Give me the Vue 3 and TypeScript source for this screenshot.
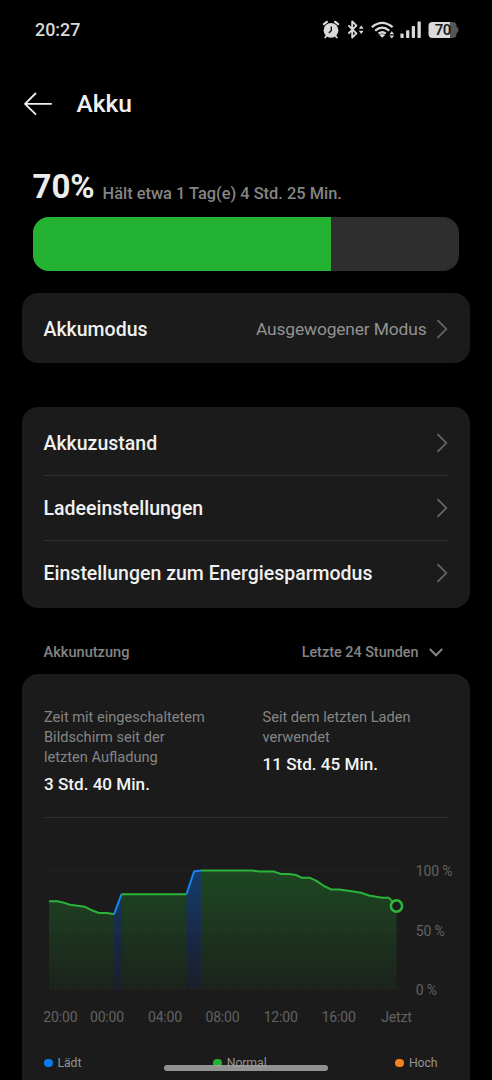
<script setup lang="ts">
interface Point { x: number; y: number }
interface Segment { kind: 'normal' | 'charging'; points: Point[] }

const level = 70
const settings: string[] = ['Akkuzustand', 'Ladeeinstellungen', 'Einstellungen zum Energiesparmodus']
const base = 129

const toPoints = (pairs: number[][]): Point[] => pairs.map(([x, y]) => ({ x, y }))

const segments: Segment[] = [
  { kind: 'normal', points: toPoints([[5, 41.3], [13, 41.3], [19, 42.4], [26, 44.8], [41, 46.8], [49, 50.8], [55, 53], [63, 53], [70, 54.3]]) },
  { kind: 'charging', points: toPoints([[70, 54.3], [77.5, 34.2]]) },
  { kind: 'normal', points: toPoints([[77.5, 34.2], [142.5, 34.2]]) },
  { kind: 'charging', points: toPoints([[142.5, 34.2], [150, 11.6], [157, 10.5]]) },
  { kind: 'normal', points: toPoints([[157, 10.5], [208, 10.5], [215, 11.6], [230, 11.6], [237, 14], [245, 14], [252, 15], [258, 17.8], [266, 17.8], [272, 20.6], [280, 26], [287, 29.4], [295, 29.4], [306, 31], [317, 32.8], [325, 35.5], [338, 37.8], [345, 37.8], [352.5, 46]]) },
]

const line = (s: Segment): string => s.points.map((p) => `${p.x},${p.y}`).join(' ')
const area = (s: Segment): string =>
  `${s.points[0].x},${base} ${line(s)} ${s.points[s.points.length - 1].x},${base}`

const rows = [
  { y: 10.5, label: '100 %' },
  { y: 70, label: '50 %' },
  { y: 129, label: '0 %' },
]
const hours = [
  { x: 16.3, label: '20:00' },
  { x: 63, label: '00:00' },
  { x: 121, label: '04:00' },
  { x: 178.5, label: '08:00' },
  { x: 236.7, label: '12:00' },
  { x: 294.7, label: '16:00' },
  { x: 352.5, label: 'Jetzt' },
]
</script>

<template>
  <div class="screen">
    <div class="status">
      <span class="clock">20:27</span>
      <svg class="status-icons" width="140" height="24" viewBox="320 18 140 24">
        <g fill="none" stroke="#dadada">
          <circle cx="331" cy="30.3" r="7.4" fill="#dadada" stroke="none" />
          <path d="M323.9 24.2l3-2.4M338.1 24.2l-3-2.4" stroke-width="2.2" stroke-linecap="round" />
          <path d="M326.8 35.5l-1.6 2M335.2 35.5l1.6 2" stroke-width="1.8" stroke-linecap="round" />
          <path d="M331.3 26.5v4l-2.4 2.4" stroke="#111" stroke-width="1.4" />
          <path d="M348.4 25.4l8 8-4.2 4.2V21.4l4.2 4.2-8 8" stroke-width="1.9" stroke-linejoin="round" />
          <path d="M371.8 27.1Q382.2 18.6 392.6 27.1M375.2 30.6Q382.2 24.6 389.2 30.6M378.6 33.7Q382.2 30.7 385.8 33.7" stroke-width="2.3" />
        </g>
        <g fill="#dadada">
          <path d="M361.2 25.6l2.4 3.2h-4.8zM361.2 34l2.4-3.2h-4.8z" />
          <path d="M379.3 35q2.9-2.2 5.8 0l-2.9 2.7z" />
          <path d="M391.8 31.3l2.4 3h-4.8zM391.8 38.4l2.4-3h-4.8z" />
          <rect x="400.4" y="33.4" width="3.2" height="4.6" rx=".7" />
          <rect x="406.1" y="30.2" width="3.2" height="7.8" rx=".7" />
          <rect x="411.8" y="26" width="3.2" height="12" rx=".7" />
          <rect x="417.5" y="21.4" width="3.3" height="16.6" rx=".7" />
          <path d="M432.5 22H450v16h-17.5q-4 0-4-4v-8q0-4 4-4z" />
          <path d="M450 22h2.5q4 0 4 4v.8q2 .6 2 3.2t-2 3.2v.8q0 4-4 4H450z" fill="#555" />
        </g>
        <text x="442.8" y="35.2" class="battery-text">70</text>
      </svg>
    </div>

    <header class="header">
      <svg width="30" height="26" viewBox="0 0 30 26" fill="none" stroke="#f0f0f0" stroke-width="1.8">
        <path d="M29.8 12.8H3M14 2L3 12.8l11 10.8" stroke-linejoin="round" />
      </svg>
      <h1>Akku</h1>
    </header>

    <div class="summary">
      <strong>{{ level }}%</strong>
      <span>Hält etwa 1 Tag(e) 4 Std. 25 Min.</span>
    </div>
    <div class="level"><div class="level-fill" :style="{ width: level + '%' }"></div></div>

    <section class="card mode">
      <span class="title">Akkumodus</span>
      <span class="value">Ausgewogener Modus</span>
      <svg class="chevron" width="12" height="20" viewBox="0 0 12 20"><path d="M1.5 1.2l8.8 8.8-8.8 8.8" /></svg>
    </section>

    <section class="card settings">
      <div v-for="item in settings" :key="item" class="setting">
        <span class="title">{{ item }}</span>
        <svg class="chevron" width="12" height="20" viewBox="0 0 12 20"><path d="M1.5 1.2l8.8 8.8-8.8 8.8" /></svg>
      </div>
    </section>

    <div class="usage-head">
      <span>Akkunutzung</span>
      <span class="period">Letzte 24 Stunden</span>
      <svg width="14" height="9" viewBox="0 0 14 9" fill="none" stroke="#858585" stroke-width="2"><path d="M.8 1L7 7.3 13.2 1" /></svg>
    </div>

    <section class="card usage">
      <div class="stats">
        <div class="stat">
          <p>Zeit mit eingeschaltetem<br />Bildschirm seit der<br />letzten Aufladung</p>
          <b>3 Std. 40 Min.</b>
        </div>
        <div class="stat">
          <p>Seit dem letzten Laden<br />verwendet</p>
          <b>11 Std. 45 Min.</b>
        </div>
      </div>

      <svg class="chart" width="426" height="170" viewBox="0 0 426 170">
        <defs>
          <linearGradient id="green" gradientUnits="userSpaceOnUse" x1="0" y1="10" x2="0" y2="129">
            <stop offset="0" stop-color="#24b434" stop-opacity=".29" />
            <stop offset="1" stop-color="#24b434" stop-opacity=".05" />
          </linearGradient>
          <linearGradient id="blue" gradientUnits="userSpaceOnUse" x1="0" y1="10" x2="0" y2="129">
            <stop offset="0" stop-color="#0a78f5" stop-opacity=".37" />
            <stop offset="1" stop-color="#0a58f5" stop-opacity=".06" />
          </linearGradient>
        </defs>
        <g v-for="row in rows" :key="row.label">
          <line x1="0" x2="359" :y1="row.y" :y2="row.y" class="grid" />
          <text x="371.8" :y="row.y + 5.5" class="axis">{{ row.label }}</text>
        </g>
        <polygon v-for="(s, i) in segments" :key="'a' + i" :points="area(s)" :class="['area', s.kind]" />
        <polyline v-for="(s, i) in segments" :key="'l' + i" :points="line(s)" :class="['line', s.kind]" />
        <circle cx="352.5" cy="46" r="5.6" class="now" />
        <text v-for="h in hours" :key="h.label" :x="h.x" y="162" class="axis hour">{{ h.label }}</text>
      </svg>

      <div class="legend">
        <span><i class="dot blue"></i>Lädt</span>
        <span class="middle"><i class="dot green"></i>Normal</span>
        <span><i class="dot orange"></i>Hoch</span>
      </div>
    </section>
    <div class="home-bar"></div>
  </div>
</template>

<style>
body { margin: 0; background: #000; }
</style>

<style scoped>
.screen {
  position: relative;
  box-sizing: border-box;
  width: 492px;
  height: 1080px;
  padding: 0 22px;
  overflow: hidden;
  background: #000;
  color: #f0f0f0;
  font-family: Roboto, sans-serif;
}
.status {
  display: flex;
  justify-content: space-between;
  align-items: center;
  height: 24px;
  padding: 18px 10px 0 13px;
}
.clock { color: #d8d8d8; font-size: 17.9px; font-weight: 500; line-height: 24px; }
.battery-text { font-size: 15px; font-weight: 600; letter-spacing: -.6px; fill: #1c1c1c; text-anchor: middle; }
.header { display: flex; align-items: center; height: 40px; margin-top: 42px; }
.header h1 { margin: 0 0 0 24.5px; font-size: 24.5px; font-weight: 500; line-height: 40px; }
.summary { display: flex; align-items: baseline; height: 46px; margin: 43px 0 0 10.5px; line-height: 40px; }
.summary strong { width: 70px; color: #ececec; font-size: 33px; font-weight: 700; }
.summary span { position: relative; top: 1px; color: #858585; font-size: 16.4px; font-weight: 500; }
.level { height: 54px; margin: 4px 11px 0; overflow: hidden; border-radius: 16px; background: #2e2e2e; }
.level-fill { height: 100%; background: #24b232; }
.card { border-radius: 16px; background: #1b1b1b; }
.title { flex: 1; color: #f0f0f0; font-size: 19.5px; font-weight: 500; }
.value { margin-right: 9.5px; color: #929292; font-size: 17.4px; letter-spacing: -.15px; }
.chevron { flex: none; margin-top: -1px; fill: none; stroke: #686868; stroke-width: 1.7; }
.mode { display: flex; align-items: center; box-sizing: border-box; height: 70px; margin-top: 22px; padding: 2px 22px 0 21.5px; }
.settings { height: 198px; margin-top: 44px; padding: 3px 22px 0 21.5px; }
.setting { display: flex; align-items: center; box-sizing: border-box; height: 65px; border-top: 1px solid transparent; }
.setting + .setting { border-color: #303030; }
.usage-head { display: flex; align-items: center; height: 20px; margin-top: 34px; padding: 0 27px 0 21.5px; color: #858585; font-size: 14.6px; font-weight: 500; }
.period { flex: 1; margin-right: 10.5px; font-size: 14.4px; text-align: right; }
.usage { height: 430px; margin-top: 12px; padding: 0 22px; }
.stats { display: grid; grid-template-columns: 218.5px 1fr; box-sizing: border-box; height: 144px; padding-top: 33px; border-bottom: 1px solid #2e2e2e; }
.stat p { margin: 0; color: #858585; font-size: 14.6px; line-height: 20px; white-space: nowrap; }
.stat b { display: block; margin-top: 4px; color: #f4f4f4; font-size: 17.1px; font-weight: 500; line-height: 26px; }
.chart { display: block; margin-top: 42px; }
.grid { stroke: #242624; stroke-width: 1; stroke-dasharray: 3 2; }
.axis { fill: #626262; font-size: 14px; letter-spacing: -.15px; }
.hour { text-anchor: middle; }
.area.normal { fill: url(#green); }
.area.charging { fill: url(#blue); }
.line { fill: none; stroke-width: 2; stroke-linejoin: round; }
.line.normal { stroke: #2ab439; }
.line.charging { stroke: #1684f2; }
.now { fill: #1b1b1b; stroke: #2ab439; stroke-width: 2.6; }
.legend { display: flex; justify-content: space-between; margin-top: 23px; padding-right: 10.5px; color: #929292; font-size: 12.3px; letter-spacing: -.1px; line-height: 20px; }
.legend span { display: flex; align-items: center; }
.legend .middle { margin-left: 3px; }
.dot { width: 8.5px; height: 8.5px; margin-right: 5px; border-radius: 50%; }
.blue { background: #0a7cf2; }
.green { background: #24b232; }
.orange { background: #f5821f; }
.home-bar { position: absolute; left: 164px; top: 1065px; width: 164px; height: 5.5px; border-radius: 3px; background: rgba(166, 166, 166, .85); }
</style>
